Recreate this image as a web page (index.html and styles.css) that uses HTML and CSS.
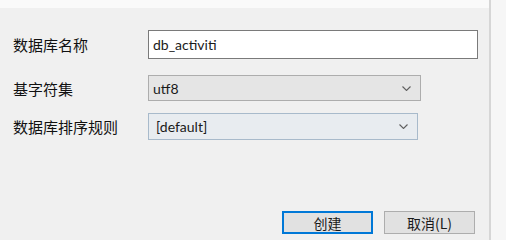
FILE: index.html
```html
<!DOCTYPE html>
<html lang="zh-CN">
<head>
    <meta charset="UTF-8">
    <meta name="viewport" content="width=device-width, initial-scale=1.0">
    <title>新建数据库</title>
    <link rel="stylesheet" href="styles.css">
</head>
<body>
    <div class="page">
        <div class="dialog">
            <div class="topbar"></div>
            <div class="form">
                <div class="row row-name">
                    <label class="label" for="dbname">数据库名称</label>
                    <input class="field text-field" id="dbname" type="text" value="db_activiti">
                </div>
                <div class="row row-charset">
                    <span class="label">基字符集</span>
                    <div class="field combo">
                        <span>utf8</span>
                        <svg class="arrow" width="9" height="5" viewBox="0 0 9 5"><path d="M0.5 0.5 L4.5 4.5 L8.5 0.5" fill="none" stroke="#606060" stroke-width="1.1"/></svg>
                    </div>
                </div>
                <div class="row row-collation">
                    <span class="label">数据库排序规则</span>
                    <div class="field combo combo-hover">
                        <span>[default]</span>
                        <svg class="arrow" width="9" height="5" viewBox="0 0 9 5"><path d="M0.5 0.5 L4.5 4.5 L8.5 0.5" fill="none" stroke="#606060" stroke-width="1.1"/></svg>
                    </div>
                </div>
            </div>
            <div class="buttons">
                <button class="btn btn-default">创建</button>
                <button class="btn">取消(L)</button>
            </div>
        </div>
        <div class="side"></div>
    </div>
</body>
</html>
```

FILE: styles.css
```css
body {
    margin: 0;
    padding: 0;
    background: #f0f0f0;
    font-family: "Noto Sans CJK SC", "Noto Sans", sans-serif;
    font-size: 15px;
    color: #111111;
}
.page {
    display: flex;
    height: 240px;
    overflow: hidden;
}
.dialog {
    width: 489px;
    border-right: 2px solid #d6d6d6;
    display: flex;
    flex-direction: column;
}
.topbar {
    height: 8px;
    background: #fafafa;
}
.side {
    flex: 1;
    background: #f6f6f6;
}
.form {
    padding: 22px 0 0 13px;
}
.row {
    display: flex;
    align-items: center;
}
.label {
    width: 135px;
    flex: none;
}
.row-name {
    height: 29px;
}
.row-charset {
    height: 26px;
    margin-top: 16px;
}
.row-collation {
    height: 27px;
    margin-top: 12px;
}
.field {
    box-sizing: border-box;
    height: 100%;
    font-family: Lato, "Noto Sans CJK SC", sans-serif;
    font-size: 14px;
    color: #1a1a1a;
}
.text-field {
    width: 330px;
    border: 1px solid #7a7a7a;
    background: #ffffff;
    padding: 0 4px;
    outline: none;
}
.combo {
    display: flex;
    align-items: center;
    justify-content: space-between;
    width: 273px;
    border: 1px solid #adadad;
    background: #e5e5e5;
    padding: 0 9px 0 4px;
}
.combo-hover {
    width: 270px;
    background: #e8ecf0;
    border-color: #a8bacb;
    padding-left: 7px;
}
.buttons {
    display: flex;
    gap: 11px;
    padding: 71px 0 0 282px;
}
.btn {
    box-sizing: border-box;
    width: 91px;
    height: 23px;
    border: 1px solid #adadad;
    background: #e1e1e1;
    font-family: "Noto Sans CJK SC", "Noto Sans", sans-serif;
    font-size: 14px;
    color: #1a1a1a;
    padding: 0;
}
.btn-default {
    border: 2px solid #0078d7;
}
```
